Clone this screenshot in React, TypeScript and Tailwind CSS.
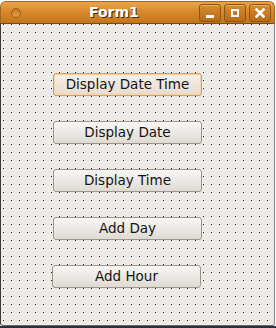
import React from "react";

const font = { fontFamily: '"DejaVu Sans", "Liberation Sans", sans-serif' };

function TitleButton({ children }: { children: React.ReactNode }) {
  return (
    <div className="w-[22px] h-[18px] rounded-[3px] border border-[#8f5210] bg-gradient-to-b from-[#d88b2e] to-[#b96c17] shadow-[inset_0_1px_0_rgba(255,220,160,0.5)] flex items-center justify-center">
      {children}
    </div>
  );
}

function FormButton({ label, focused, ml }: { label: string; focused?: boolean; ml: string }) {
  return (
    <div
      className={
        "relative w-[149px] h-[23px] rounded-[3px] flex items-center justify-center text-[13.5px] text-[#141414] " +
        ml +
        (focused
          ? " border border-[#e39a45] bg-gradient-to-b from-[#f7f1ea] to-[#e6dbcf] shadow-[inset_0_0_0_1px_#f5d3aa]"
          : " border border-[#9c958c] bg-gradient-to-b from-[#f8f7f5] to-[#dfdad3]")
      }
    >
      {label}
    </div>
  );
}

export default function App() {
  return (
    <div className="w-[276px] h-[328px] bg-white relative overflow-hidden" style={font}>
      <div className="w-[275px] h-[326px] flex flex-col">
        <div className="mt-[1px] h-[22px] rounded-t-[6px] border border-b-0 border-[#a8661c] bg-gradient-to-b from-[#e9a449] via-[#d6872a] to-[#c4761d] flex items-center relative shrink-0">
          <div className="ml-[10px] w-[10px] h-[10px] rounded-full border border-[#9a5a12] bg-gradient-to-b from-[#c67a22] to-[#e0a050]" />
          <div className="ml-[68px] text-[14px] font-bold text-white [text-shadow:1px_1px_0_#4a2e0a]">Form1</div>
          <div className="ml-auto mr-[3px] flex gap-[3px]">
            <TitleButton>
              <div className="w-[8px] h-[3px] bg-white mt-[7px]" />
            </TitleButton>
            <TitleButton>
              <div className="w-[8px] h-[8px] border-2 border-white" />
            </TitleButton>
            <TitleButton>
              <svg width="10" height="10" viewBox="0 0 10 10">
                <path d="M1.5 1.5 L8.5 8.5 M8.5 1.5 L1.5 8.5" stroke="white" strokeWidth="2.6" strokeLinecap="square" />
              </svg>
            </TitleButton>
          </div>
        </div>
        <div className="flex-1 relative bg-[#edebe7] border-l border-r border-b border-l-[#3c3a36] border-r-[#8a8680] border-b-[#6a6660] border-t border-t-[#7a4a12] rounded-b-[3px] flex flex-col pt-[49px] gap-[25px]">
          <svg className="absolute inset-0 w-full h-full">
            <defs>
              <pattern id="dots" width="8" height="8" patternUnits="userSpaceOnUse">
                <rect x="2" y="0" width="1" height="1" fill="#1a1a1a" />
              </pattern>
            </defs>
            <rect width="100%" height="100%" fill="url(#dots)" shapeRendering="crispEdges" />
          </svg>
          <FormButton label="Display Date Time" focused ml="ml-[52px]" />
          <FormButton label="Display Date" ml="ml-[52px]" />
          <FormButton label="Display Time" ml="ml-[52px]" />
          <FormButton label="Add Day" ml="ml-[52px]" />
          <FormButton label="Add Hour" ml="ml-[51px]" />
        </div>
      </div>
      <div className="h-[2px] bg-[#2b3140]" />
    </div>
  );
}
